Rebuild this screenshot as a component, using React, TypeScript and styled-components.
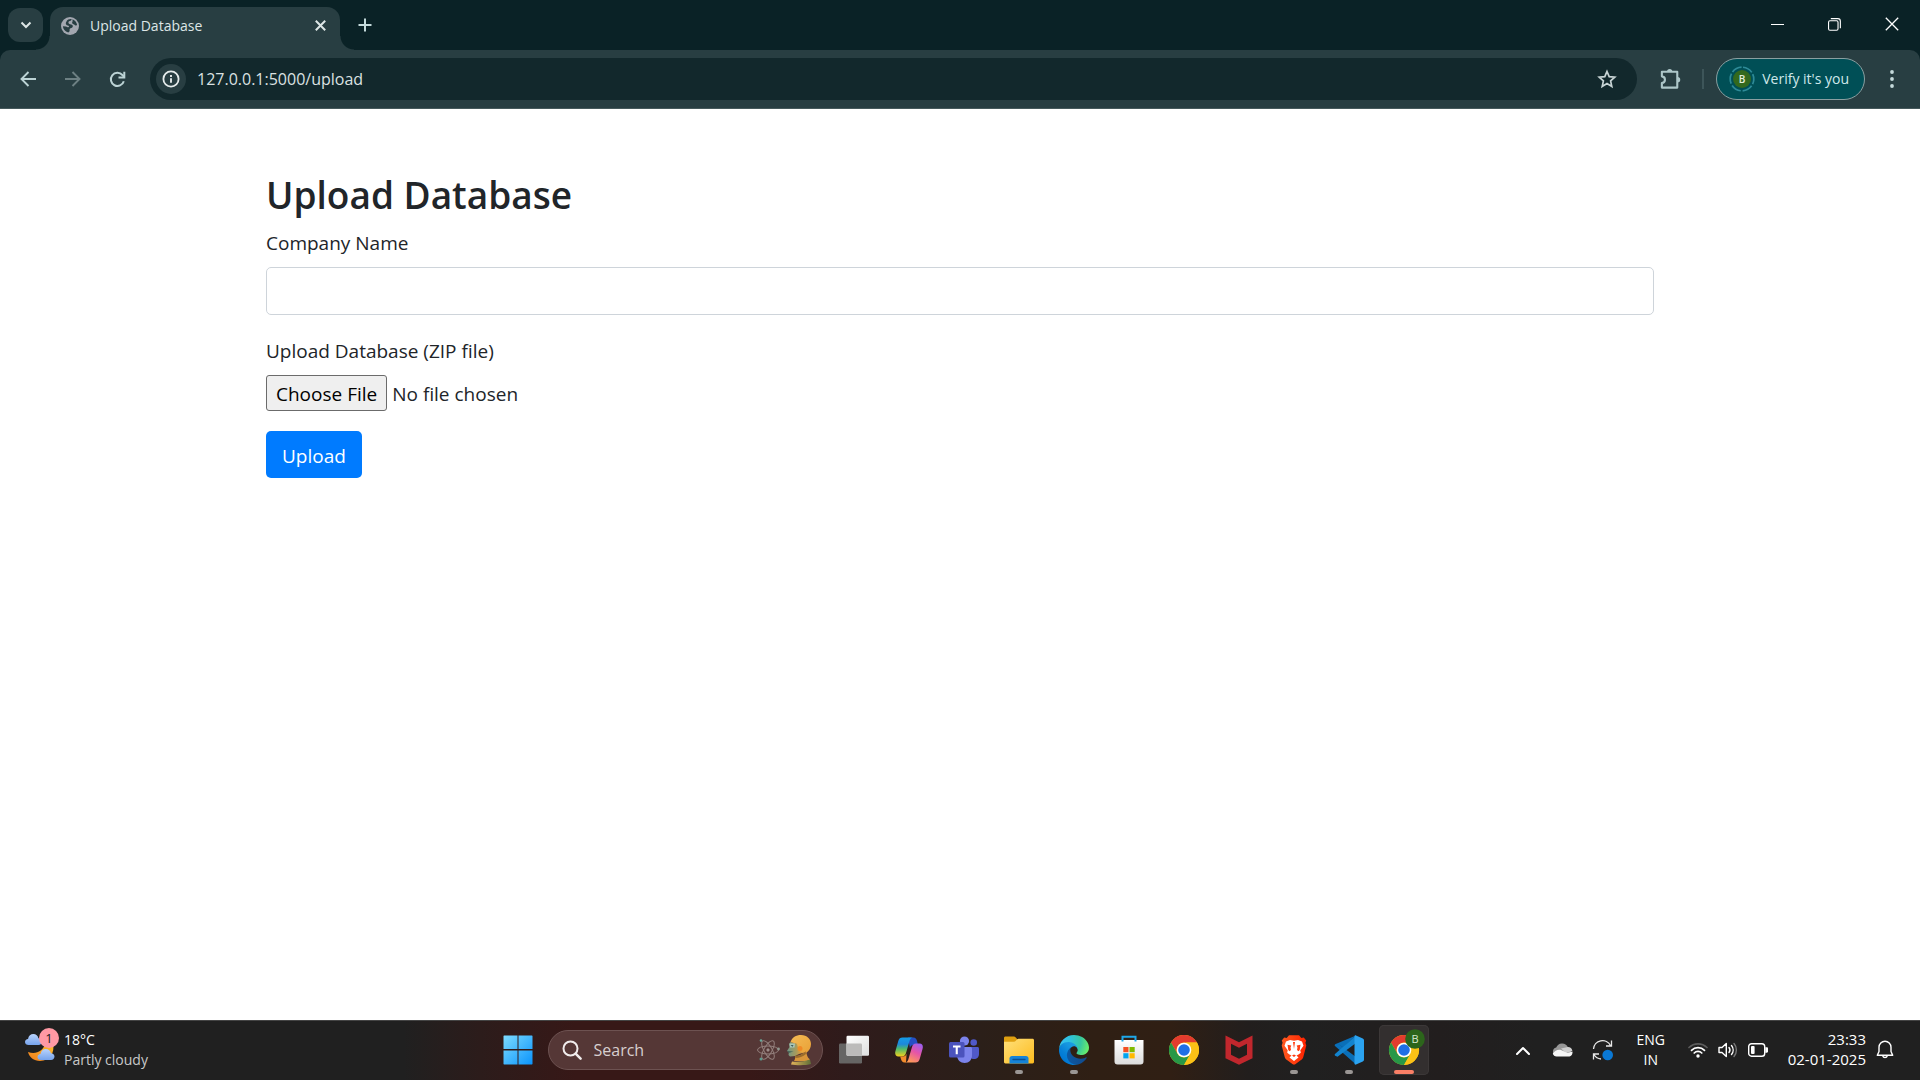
import React from "react";
import styled, { createGlobalStyle } from "styled-components";

const GlobalStyle = createGlobalStyle`
  *, *::before, *::after { box-sizing: border-box; }
  body {
    margin: 0;
    background: #fff;
    font-family: "Segoe UI", "Open Sans", "Noto Sans", sans-serif;
  }
  button, input { font-family: inherit; margin: 0; }
  svg { display: block; flex: none; }
`;

const Screen = styled.div`
  display: grid;
  grid-template-rows: auto 1fr auto;
  min-height: 100vh;
`;

const BareButton = styled.button`
  display: flex;
  align-items: center;
  justify-content: center;
  padding: 0;
  border: 0;
  background: transparent;
  color: inherit;
`;

/* ---------- browser frame ---------- */

const TabStrip = styled.div`
  display: flex;
  height: 50px;
  padding-left: 8px;
  background: #0a2226;
  color: #dde6e6;
`;

const TabSearch = styled(BareButton)`
  width: 35px;
  height: 34px;
  margin: 8px 7px 0 0;
  border-radius: 12px;
  background: #283e42;
`;

const Tab = styled.div`
  position: relative;
  display: flex;
  align-items: center;
  width: 290px;
  height: 43px;
  margin-top: 7px;
  padding: 0 12px 6px 11px;
  border-radius: 13px 13px 0 0;
  background: #283e42;

  &::before, &::after {
    content: "";
    position: absolute;
    bottom: 0;
    width: 14px;
    height: 14px;
  }
  &::before {
    left: -14px;
    background: radial-gradient(circle at 0 0, transparent 13px, #283e42 14px);
  }
  &::after {
    right: -14px;
    background: radial-gradient(circle at 100% 0, transparent 13px, #283e42 14px);
  }
`;

const TabTitle = styled.span`
  flex: 1;
  margin-left: 11px;
  font-size: 14px;
  line-height: 20px;
`;

const TabClose = styled(BareButton)`
  width: 16px;
  height: 20px;
`;

const NewTab = styled(BareButton)`
  width: 34px;
  height: 34px;
  margin: 8px 0 0 8px;
`;

const WindowControls = styled.div`
  display: flex;
  margin-left: auto;
  color: #fff;
`;

const WindowButton = styled(BareButton)`
  width: 57px;
  height: 48px;
`;

const ToolbarBack = styled.div`
  background: #0a2226;
`;

const Toolbar = styled.div`
  display: flex;
  align-items: center;
  height: 59px;
  padding: 0 13px 0 5px;
  border-radius: 10px 10px 0 0;
  border-bottom: 1px solid #46595c;
  background: #283e42;
  color: #bcd3d5;
`;

const NavButton = styled(BareButton)`
  width: 45px;
  height: 42px;
  color: ${(p) => (p.disabled ? "#6d8083" : "#bcd3d5")};
`;

const Omnibox = styled.div`
  display: flex;
  flex: 1;
  align-items: center;
  height: 42px;
  margin: 0 23px 0 10px;
  padding: 0 20px 0 6px;
  border-radius: 21px;
  background: #12282c;
`;

const SiteInfo = styled(BareButton)`
  width: 30px;
  height: 30px;
  border-radius: 15px;
  background: #283e42;
  color: #e6ecec;
`;

const UrlInput = styled.input`
  flex: 1;
  min-width: 0;
  height: 32px;
  margin-left: 11px;
  padding: 0;
  border: 0;
  outline: 0;
  background: transparent;
  color: #dbe1e2;
  font-size: 16px;
`;

const ToolbarDivider = styled.span`
  width: 2px;
  height: 20px;
  margin: 0 12px 0 20px;
  background: #3d5559;
`;

const VerifyButton = styled(BareButton)`
  gap: 7px;
  height: 42px;
  padding: 0 15px 1px 12px;
  border: 1px solid #8a9fa1;
  border-radius: 21px;
  background: #004f56;
  color: #cfe8ea;
  font-size: 14px;
  white-space: nowrap;
`;

const MenuButton = styled(BareButton)`
  width: 30px;
  height: 42px;
  margin-left: 12px;
  color: #c5dadb;
`;

/* ---------- page ---------- */

const Page = styled.main`
  width: 100%;
  max-width: 1426px;
  margin: 0 auto;
  padding: 60px 19px 40px;
  color: #212529;
  font-size: 19px;
  line-height: 32px;
`;

const Heading = styled.h2`
  margin: 0 0 6px;
  font-size: 37px;
  font-weight: 600;
  line-height: 52px;
`;

const Field = styled.div`
  display: flex;
  flex-direction: column;
  align-items: flex-start;
  margin-bottom: 20px;
`;

const Label = styled.label`
  margin-bottom: 8px;
`;

const TextInput = styled.input`
  width: 100%;
  height: 48px;
  padding: 8px 15px;
  border: 1px solid #ced4da;
  border-radius: 5px;
  background: #fff;
  color: #495057;
  font-size: 19px;
`;

const FileInput = styled.input`
  width: 100%;
  height: 36px;
  color: #212529;
  font-size: 19px;
  line-height: 30px;

  &::file-selector-button {
    height: 36px;
    margin: 0 5px 0 0;
    padding: 2px 9px 0;
    border: 1px solid #6b6b6b;
    border-radius: 3px;
    background: #efefef;
    color: #000;
    font-family: inherit;
    font-size: 19px;
    line-height: 30px;
  }
`;

const SubmitButton = styled.button`
  height: 47px;
  padding: 2px 16px 0;
  border: 0;
  border-radius: 5px;
  background: #007bff;
  color: #fff;
  font-size: 19px;
  line-height: 30px;
`;

/* ---------- taskbar ---------- */

const Taskbar = styled.footer`
  display: grid;
  grid-template-columns: 1fr auto 1fr;
  height: 60px;
  padding-bottom: 1px;
  border-top: 1px solid #444;
  background: linear-gradient(
    90deg,
    #202020 0%,
    #202020 21%,
    #2c1c1b 25%,
    #371817 30%,
    #371817 39%,
    #2f1b1b 44%,
    #2b1f19 51%,
    #2f1f14 57%,
    #301f14 61%,
    #221e1d 65%,
    #202020 68%,
    #221e1e 75%,
    #202020 80%
  );
  color: #fff;
`;

const Weather = styled(BareButton)`
  justify-content: flex-start;
  align-self: center;
  justify-self: start;
  gap: 4px;
  height: 50px;
  padding-left: 24px;
  font-size: 14px;
  line-height: 20px;
  text-align: left;
`;

const WeatherText = styled.span`
  display: flex;
  flex-direction: column;
  padding-bottom: 1px;
`;

const Dim = styled.span`
  color: #c8c8c8;
`;

const Apps = styled.nav`
  display: flex;
  align-items: center;
`;

const AppButton = styled(BareButton)<{ $active?: boolean }>`
  position: relative;
  width: 50px;
  height: 50px;
  margin: 0 2px 0 3px;
  border-radius: 5px;
  background: ${(p) => (p.$active ? "#332f2f" : "transparent")};
  box-shadow: ${(p) => (p.$active ? "inset 0 0 0 1px #3c3838" : "none")};
`;

const Indicator = styled.span<{ $active?: boolean }>`
  position: absolute;
  bottom: 1px;
  left: 50%;
  width: ${(p) => (p.$active ? "20px" : "8px")};
  height: 4px;
  border-radius: 2px;
  background: ${(p) => (p.$active ? "#f97f66" : "#9a9694")};
  transform: translateX(-50%);
`;

const SearchBox = styled.label`
  display: flex;
  align-items: center;
  gap: 6px;
  width: 275px;
  height: 40px;
  margin: 0 3px;
  padding: 0 10px 0 13px;
  border: 1px solid #6d5251;
  border-radius: 20px;
  background: #553736;
`;

const SearchInput = styled.input`
  flex: 1;
  min-width: 0;
  margin-left: 6px;
  padding: 0;
  border: 0;
  outline: 0;
  background: transparent;
  color: #fff;
  font-size: 16px;
  &::placeholder { color: #d8cfcf; opacity: 1; }
`;

const Tray = styled.div`
  display: flex;
  align-items: center;
  justify-content: flex-end;
  padding-right: 26px;
  font-size: 14px;
  line-height: 20px;
`;

const TrayButton = styled(BareButton)`
  width: 40px;
  height: 50px;
`;

const Language = styled(BareButton)`
  flex-direction: column;
  width: 56px;
  height: 50px;
  font-size: 14px;
  line-height: 20px;
`;

const Status = styled(BareButton)`
  gap: 10px;
  height: 50px;
  margin-left: 9px;
`;

const Clock = styled(BareButton)`
  flex-direction: column;
  align-items: flex-end;
  height: 50px;
  margin: 0 10px 0 20px;
  padding-bottom: 2px;
  font-size: 15px;
  line-height: 20px;
`;

/* ---------- drawings ---------- */

const GlobeIcon = () => (
  <svg width="18" height="18" viewBox="0 0 18 18">
    <circle cx="9" cy="9" r="9" fill="#a3a7b0" />
    <path d="M10.500 2c.3 1.200-.6 1.700-1.700 2-1.200.4-1.500 1-1.300 2 .2 1 1.300 1.200 2.500 1.400 1.400.3 2 1 1.800 2.100-.3 1.200-1.200 1.400-2.200 1.700-.9.300-1.100.9-1 1.900.2 1.300-.2 2-1.400 2.500C4 14.600 2 12 1.900 9.200l3 .3c1.200.1 1.500.9 2.400.8.700-.1 1-.9.300-1.500-1-.8-2.400-.6-2.700-1.900-.3-1.300.5-2 .8-2.900.2-.6.8-1 1.500-1.400 1-.5 2-.7 3.300-.6z" fill="#283e42" />
    <path d="M11.500 2.200c2.500 1 4.300 3.200 4.600 5.800-.7.700-1.600.5-2.300-.1-.8-.7-1.700-.6-2.400-1.400-.7-.9.100-1.500.2-2.400z" fill="#283e42" />
  </svg>
);

const ChevronDown = () => (
  <svg width="12" height="8" viewBox="0 0 12 8" fill="none" stroke="currentColor" strokeWidth="2">
    <path d="M1.500 1.500 6 6l4.500-4.500" />
  </svg>
);

const CloseIcon = ({ size, weight }: { size: number; weight: number }) => (
  <svg width={size} height={size} viewBox={`0 0 ${size} ${size}`} fill="none" stroke="currentColor" strokeWidth={weight}>
    <path d={`M.8.800 ${size - 0.8} ${size - 0.8}M${size - 0.8}.8.8 ${size - 0.8}`} />
  </svg>
);

const PlusIcon = () => (
  <svg width="14" height="14" viewBox="0 0 14 14" stroke="#c4dadb" strokeWidth="2">
    <path d="M7 .5v13M.5 7h13" />
  </svg>
);

const MinimizeIcon = () => (
  <svg width="13" height="13" viewBox="0 0 13 13" stroke="currentColor">
    <path d="M0 6.500h13" />
  </svg>
);

const RestoreIcon = () => (
  <svg width="13" height="13" viewBox="0 0 14 14" fill="none" stroke="currentColor" strokeWidth="1.200">
    <rect x=".6" y="3" width="10.200" height="10.200" rx="1.500" />
    <path d="M3 .7h7.600a2.700 2.700 0 0 1 2.700 2.700V11" />
  </svg>
);

const ArrowIcon = ({ flip }: { flip?: boolean }) => (
  <svg width="16" height="16" viewBox="0 0 16 16" fill="none" stroke="currentColor" strokeWidth="1.900">
    <path d={flip ? "M0 8h14M7.500 1l7 7-7 7" : "M16 8H2M8.500 1l-7 7 7 7"} />
  </svg>
);

const ReloadIcon = () => (
  <svg width="17" height="17" viewBox="0 0 17 17" fill="none" stroke="currentColor" strokeWidth="2">
    <path d="M14.800 10.200A6.600 6.600 0 1 1 13.400 4L15.300 6" />
    <path d="M15.300.800v5.800H9.500" />
  </svg>
);

const InfoIcon = () => (
  <svg width="18" height="18" viewBox="0 0 18 18" fill="none" stroke="currentColor">
    <circle cx="9" cy="9" r="7.600" strokeWidth="1.800" />
    <path d="M9 8.200v4.600M9 4.900v2" strokeWidth="1.900" />
  </svg>
);

const StarIcon = () => (
  <svg width="20" height="20" viewBox="0 0 20 20" fill="none" stroke="#c7d3d4" strokeWidth="1.700">
    <path d="m10 2.500 2.200 5.200 5.600.5-4.200 3.700 1.200 5.500L10 14.500l-4.800 2.900 1.200-5.500L2.200 8.200l5.600-.5z" />
  </svg>
);

const PuzzleIcon = () => (
  <svg width="22" height="22" viewBox="1 .5 20 20">
    <path d="M2.700 3.900h14v14.400h-14v-4.200c1.800-.2 2.800-1.400 2.800-3s-1-2.800-2.800-3z" fill="none" stroke="#adc7c9" strokeWidth="1.900" strokeLinejoin="round" />
    <path d="M7.400 3.800a2.400 2.400 0 0 1 4.800 0zM17 8.700a2.400 2.400 0 0 1 0 4.800z" fill="#adc7c9" />
  </svg>
);

const ProfileIcon = () => (
  <svg width="26" height="26" viewBox="0 0 26 26">
    <circle cx="13" cy="13" r="11.800" fill="none" stroke="#2e8b98" strokeWidth="1.700" strokeDasharray="10.400 1.950" transform="rotate(-85 13 13)" />
    <circle cx="13" cy="13" r="9" fill="#33691e" />
    <text x="13" y="17" fontSize="10" fontWeight="600" textAnchor="middle" fill="#e3eedd">B</text>
  </svg>
);

const DotsIcon = () => (
  <svg width="4" height="18" viewBox="0 0 4 18" fill="currentColor">
    <circle cx="2" cy="2" r="1.900" />
    <circle cx="2" cy="9" r="1.900" />
    <circle cx="2" cy="16" r="1.900" />
  </svg>
);

const CLOUD = "M3.500 12C1.500 12 0 10.700 0 8.900c0-1.700 1.300-2.900 3-3C3.600 2.600 5.700 1 8.300 1c2.700 0 4.700 1.800 5.100 4.300 2.100 0 3.600 1.400 3.600 3.300S15.600 12 13.500 12z";

const WeatherIcon = () => (
  <svg width="36" height="44" viewBox="0 0 36 44">
    <defs>
      <linearGradient id="cloud" x1="0" y1="0" x2="0" y2="1">
        <stop offset="0" stopColor="#b9d3fb" />
        <stop offset="1" stopColor="#76a3ec" />
      </linearGradient>
      <linearGradient id="moon" x1="0" y1="1" x2="1" y2="0">
        <stop offset="0" stopColor="#ef7d1c" />
        <stop offset="1" stopColor="#ffbe2e" />
      </linearGradient>
    </defs>
    <path d="M4 24c8 3 15-1 17-8l8 0c2 8-3 17-13 17C10 33 5 29 4 24z" fill="url(#moon)" />
    <path d={CLOUD} fill="url(#cloud)" transform="translate(1 5)" />
    <path d={CLOUD} fill="url(#cloud)" transform="translate(13.500 20)" />
    <circle cx="25" cy="10" r="10" fill="#ff99a4" />
    <text x="25" y="15" fontSize="13" textAnchor="middle" fill="#1c1c1c">1</text>
  </svg>
);

const WindowsIcon = () => (
  <svg width="30" height="30" viewBox="0 0 30 30">
    <linearGradient id="win" x1="0" y1="0" x2="1" y2="1" gradientUnits="objectBoundingBox">
      <stop offset="0" stopColor="#7ddcff" />
      <stop offset="1" stopColor="#0a93fb" />
    </linearGradient>
    <path d="M1 .5h13.500V14H.5V1zM15.500.5h13.500l.5.5v13h-14zM.5 15.500h14v14H1l-.5-.5zM15.500 15.500h14V29l-.5.5H15.500z" fill="url(#win)" />
  </svg>
);

const SearchIcon = () => (
  <svg width="20" height="20" viewBox="0 0 20 20" fill="none" stroke="#f1ecec" strokeWidth="2" strokeLinecap="round">
    <circle cx="8.500" cy="8.500" r="7" />
    <path d="m13.600 13.600 5 5" strokeWidth="2.500" />
  </svg>
);

const AtomIcon = () => (
  <svg width="24" height="24" viewBox="0 0 24 24" fill="none" stroke="#94807d" strokeWidth="1">
    <ellipse cx="12" cy="12" rx="10.500" ry="4" />
    <ellipse cx="12" cy="12" rx="10.500" ry="4" transform="rotate(60 12 12)" />
    <ellipse cx="12" cy="12" rx="10.500" ry="4" transform="rotate(120 12 12)" />
    <circle cx="12" cy="12" r="1.200" fill="#b5aaa5" />
    <circle cx="5" cy="2.500" r="1.300" fill="#69a79a" stroke="none" />
    <circle cx="22.500" cy="11" r="1.400" fill="#8f9790" stroke="none" />
    <circle cx="5" cy="21" r="1.500" fill="#5d9a8e" stroke="none" />
  </svg>
);

const BustIcon = () => (
  <svg width="26" height="32" viewBox="0 0 26 32">
    <defs>
      <linearGradient id="bust" x1="0" y1="0" x2="1" y2="0">
        <stop offset="0" stopColor="#6f9688" />
        <stop offset=".4" stopColor="#a79b5c" />
        <stop offset=".6" stopColor="#dc9c3c" />
        <stop offset="1" stopColor="#f5bd55" />
      </linearGradient>
      <linearGradient id="skull" x1="0" y1="0" x2="1" y2="1">
        <stop offset="0" stopColor="#f3ba55" />
        <stop offset="1" stopColor="#e9a136" />
      </linearGradient>
      <linearGradient id="base" x1="0" y1="0" x2="1" y2="0">
        <stop offset="0" stopColor="#e3b35a" />
        <stop offset="1" stopColor="#5f6f38" />
      </linearGradient>
    </defs>
    <path d="M4.500 8 3 10l.5 3L1 17l2 1-.5 3 1.500 1.500 5-.5 4-2 7-2 4-5z" fill="url(#bust)" />
    <path d="M4.500 8C6 3.500 10 1 15 1c6 0 10 4 10 9 0 4-2 7-5 9l-7-2-2-7z" fill="url(#skull)" />
    <path d="M9 22c4 0 8-2 11-5 1 4 1 6 4 8.500l-3 1.500H8c1-2 1.500-3 1-5z" fill="#d8953a" />
    <path d="M9 22c4 0 8-2 10.500-4.500l.5 2.500c-3 2.500-7 4-10.500 4z" fill="#9a6c2c" />
    <path d="M6 27.500c6 .5 12 0 18-2l1 4.500c-5 1.500-14 1.500-20 .5z" fill="url(#base)" />
    <path d="m3.500 9.500 5.500 0-.5 4-4.500 0z" fill="#a9c5b7" />
    <path d="m4.500 11 3 .3-1 1.500z" fill="#2f4b4b" />
    <path d="m1.500 17 6 .5-5 1.500z" fill="#47665a" />
    <circle cx="14" cy="14.500" r="2.500" fill="#f08a26" />
  </svg>
);

const TaskViewIcon = () => (
  <svg width="30" height="30" viewBox="0 0 30 30">
    <linearGradient id="tv" x1="0" y1="0" x2="1" y2="1">
      <stop offset="0" stopColor="#fff" />
      <stop offset="1" stopColor="#dedede" />
    </linearGradient>
    <rect x="0" y="8.500" width="23" height="20" rx="1.200" fill="#666564" />
    <rect x="7.500" y=".8" width="22.500" height="20" rx="1.200" fill="url(#tv)" />
    <path d="M7.500 8.500h14.300a1.200 1.200 0 0 1 1.200 1.200v11.100H8.700a1.200 1.200 0 0 1-1.200-1.200z" fill="#bcbbba" />
  </svg>
);

const CopilotIcon = () => (
  <svg width="28" height="26" viewBox="0 0 28 26">
    <defs>
      <linearGradient id="cpa" x1=".3" y1="0" x2=".3" y2="1">
        <stop offset="0" stopColor="#149de8" />
        <stop offset=".35" stopColor="#1d88dc" />
        <stop offset=".6" stopColor="#4fba6a" />
        <stop offset="1" stopColor="#f6d01c" />
      </linearGradient>
      <linearGradient id="cpb" x1=".8" y1="0" x2=".3" y2="1">
        <stop offset="0" stopColor="#9c5ff0" />
        <stop offset=".45" stopColor="#e554a8" />
        <stop offset="1" stopColor="#ff9c55" />
      </linearGradient>
    </defs>
    <path d="M17 .5h1.500c2 0 2.900 1.300 3.500 3.200L23 8h-4.500c-2 0-3 1-3.600 3L13 .5z" fill="#244fc5" />
    <path d="M7.500.5H18c-2 0-2.800 1.400-3.400 3.300L11 16c-.7 2.300-1.700 3.500-4 3.500H3.500C.5 19.500-.3 17 .4 14.300L3.300 4C4 1.600 5.300.5 7.500.5z" fill="url(#cpa)" />
    <path d="M11 25.500H9.500c-2 0-2.900-1.300-3.500-3.200l-.8-2.800H8c2 0 3-1 3.600-3z" fill="#f28c2c" />
    <path d="M20.500 25.500H10c2 0 2.800-1.400 3.400-3.300L17 10c.7-2.300 1.700-3.500 4-3.500h3.500c3 0 3.800 2.500 3.100 5.200L24.700 22c-.7 2.400-2 3.500-4.200 3.500z" fill="url(#cpb)" />
  </svg>
);

const TeamsIcon = () => (
  <svg width="30" height="28" viewBox="0 0 30 28">
    <circle cx="24.700" cy="6.500" r="3.300" fill="#5059c9" />
    <path d="M20 11h8.500c.8 0 1.500.7 1.500 1.500V18c0 3-2 5-5 5s-5-2-5-5z" fill="#5059c9" />
    <circle cx="15.500" cy="5" r="4.600" fill="#7b83eb" />
    <path d="M9 11h12.500c.8 0 1.500.7 1.500 1.500V19c0 5-3 8-7.300 8S8 24 8 19v-7c0-.6.400-1 1-1z" fill="#7b83eb" />
    <rect x="0" y="6" width="15.500" height="15.500" rx="1.500" fill="#4b53bc" />
    <path d="M4 9.500h7.500v2H8.800v6.700H6.700v-6.700H4z" fill="#fff" />
  </svg>
);

const ExplorerIcon = () => (
  <svg width="30" height="28" viewBox="0 0 30 28">
    <linearGradient id="fold" x1="0" y1="0" x2="1" y2="1">
      <stop offset="0" stopColor="#ffe07a" />
      <stop offset="1" stopColor="#fdbb1e" />
    </linearGradient>
    <path d="M0 2C0 1 .7.500 1.500.500h8c1 0 1.500.3 2.200 1L14 4H30v6H0z" fill="#e0a010" />
    <path d="M0 5.800h9.500c1 0 1.600-.3 2.300-1l1.200-1.200c.6-.6 1-.8 2-.8h13.500c.8 0 1.500.6 1.500 1.400V26c0 .8-.6 1.400-1.400 1.400H1.400C.6 27.400 0 26.800 0 26z" fill="url(#fold)" />
    <path d="M5.500 27.500V22.500c0-1.500 1-2.500 2.500-2.500h14c1.500 0 2.500 1 2.500 2.500v5z" fill="#1583d8" />
    <path d="M9 23.500h12" stroke="#0a4f93" strokeWidth="1.300" strokeLinecap="round" />
  </svg>
);

const EdgeIcon = () => (
  <svg width="30" height="30" viewBox="0 0 256 256">
    <defs>
      <linearGradient id="e1" x1="63" y1="177" x2="241" y2="177" gradientUnits="userSpaceOnUse">
        <stop offset="0" stopColor="#0c59a4" />
        <stop offset="1" stopColor="#114a8b" />
      </linearGradient>
      <linearGradient id="e2" x1="157" y1="99" x2="46" y2="221" gradientUnits="userSpaceOnUse">
        <stop offset="0" stopColor="#1b9de2" />
        <stop offset=".3" stopColor="#1595df" />
        <stop offset=".7" stopColor="#0680d7" />
        <stop offset="1" stopColor="#0078d4" />
      </linearGradient>
      <radialGradient id="e3" cx="26" cy="45" r="230" gradientUnits="userSpaceOnUse">
        <stop offset="0" stopColor="#35c1f1" />
        <stop offset=".3" stopColor="#2fc2df" />
        <stop offset=".7" stopColor="#36c7a0" />
        <stop offset="1" stopColor="#66eb6e" />
      </radialGradient>
    </defs>
    <path d="M231 190.500c-3.400 1.800-6.900 3.400-10.500 4.700a101.700 101.700 0 0 1-35.900 6.500c-47.300 0-88.500-32.500-88.500-74.300.1-11.400 6.400-21.900 16.400-27.300-42.800 1.800-53.800 46.400-53.800 72.500 0 74 68.100 81.400 82.800 81.400 7.900 0 19.800-2.300 27-4.600l1.300-.4a128.300 128.300 0 0 0 66.600-52.800 4 4 0 0 0-5.400-5.700z" fill="url(#e1)" />
    <path d="M105.700 241.400a79.200 79.200 0 0 1-22.700-21.300 80.700 80.700 0 0 1 29.500-120c3.200-1.500 8.500-4.200 15.600-4.100 10.200.1 19.700 5 25.700 13.200 4 5.400 6.300 11.900 6.300 18.700 0-.2 24.500-79.600-80-79.600-43.900 0-80 41.700-80 78.200-.2 19.300 4 38.500 12.100 56a128 128 0 0 0 156.400 67.100 75.500 75.500 0 0 1-62.900-8.200z" fill="url(#e2)" />
    <path d="M152.300 148.900c-.9 1-3.400 2.500-3.400 5.600 0 2.600 1.700 5.200 4.800 7.300 14.300 10 41.400 8.600 41.500 8.600 10.700 0 21.100-2.900 30.300-8.300A61.400 61.400 0 0 0 256 109.100c.3-22.400-8-37.300-11.300-43.900C223.500 23.900 177.700 0 128 0A128 128 0 0 0 0 126.200c.5-36.500 36.800-66 80-66 3.500 0 23.500.3 42 10.100 16.300 8.600 24.900 18.900 30.800 29.200 6.200 10.700 7.300 24.100 7.300 29.500 0 5.300-2.700 13.300-7.800 19.900z" fill="url(#e3)" />
  </svg>
);

const StoreIcon = () => (
  <svg width="30" height="30" viewBox="0 0 30 30">
    <linearGradient id="bag" x1="0" y1="0" x2="0" y2="1">
      <stop offset="0" stopColor="#fff" />
      <stop offset="1" stopColor="#dcdcdc" />
    </linearGradient>
    <path d="M.5 5h29v21.500a3 3 0 0 1-3 3h-23a3 3 0 0 1-3-3z" fill="url(#bag)" />
    <path d="M8.500 6.500V1.700h13v4.800" fill="none" stroke="#1ea7e8" strokeWidth="2" />
    <path d="M9.300 12h5.200v5.200H9.300z" fill="#f25022" />
    <path d="M15.500 12h5.200v5.200h-5.200z" fill="#7fba00" />
    <path d="M9.300 18.200h5.200v5.200H9.300z" fill="#00a4ef" />
    <path d="M15.500 18.200h5.200v5.200h-5.200z" fill="#ffb900" />
  </svg>
);

const ChromeIcon = ({ badge }: { badge?: boolean }) => (
  <svg width={badge ? 42 : 30} height={badge ? 42 : 30} viewBox={badge ? "-6 -6 42 42" : "0 0 30 30"}>
    <circle cx="15" cy="15" r="15" fill="#fbc116" />
    <path d="M2 7.500A15 15 0 0 1 28 7.500H15a7.500 7.500 0 0 0-6.500 11.200z" fill="#e33b2e" />
    <path d="M2 7.500 8.500 18.750A7.500 7.500 0 0 0 21.500 18.750L15 30A15 15 0 0 1 2 7.500z" fill="#279847" />
    <path d="M15 7.500h13A15 15 0 0 1 15 30l6.500-11.250A7.500 7.500 0 0 0 15 7.500z" fill="#fbc116" />
    <circle cx="15" cy="15" r="7.300" fill="#fff" />
    <circle cx="15" cy="15" r="5.800" fill="#1f6fe5" />
    {badge && (
      <>
        <circle cx="26" cy="4" r="9.800" fill="#2c651b" />
        <text x="26" y="8" fontSize="11" textAnchor="middle" fill="#d7e8cf">B</text>
      </>
    )}
  </svg>
);

const McAfeeIcon = () => (
  <svg width="28" height="30" viewBox="0 0 28 30">
    <path d="M.5.5 14 7.300 27.500.5v22.700L14 29.800.5 23.200zM6 8.800v11l8 4 8-4v-11l-8 4z" fill="#c1272d" fillRule="evenodd" />
  </svg>
);

const BraveIcon = () => (
  <svg width="26" height="30" viewBox="0 0 26 30">
    <linearGradient id="brave" x1="0" y1="0" x2="1" y2="0">
      <stop offset="0" stopColor="#ff5a1f" />
      <stop offset="1" stopColor="#ff2200" />
    </linearGradient>
    <path d="M8 .3h10l2.300 2.600 2.500-.5 2.400 3-.8 2.400.9 2.600-3 11.500c-.4 1.500-1.200 2.300-2.300 3.100L14.600 29c-1 .7-2.200.7-3.200 0L6 25c-1.100-.8-1.900-1.600-2.300-3.100L.7 10.400l.9-2.600L.8 5.400l2.400-3 2.500.5z" fill="url(#brave)" />
    <path d="M5 6.500 9 5l4 .7L17 5l4 1.500 1.500 4.200-3.200 4.600.5 2.500-2.300 1.600-2 1.200 2 1.800-4.500 3.600-4.500-3.600 2-1.800-2-1.200-2.300-1.600.5-2.500-3.200-4.600z" fill="#fff" />
    <path d="m6.500 9.700 3.800.8-.8 2 .5 2.500-1.500 1.300-1.200-1.300zM19.500 9.700l-3.800.8.8 2-.5 2.500 1.500 1.300 1.200-1.300zM11 20.500l2-1 2 1-2 1.500zM12 7h2l-1 7z" fill="#ff3c10" />
  </svg>
);

const VSCodeIcon = () => (
  <svg width="30" height="30" viewBox="0 0 30 30">
    <path d="M22 .6 9 12.500l-5.500-4.200-2.300.9c-.7.600-.7 1.200-.2 1.700L22 29.500V22L3.500 8.300z" fill="#0a6fb8" />
    <path d="M22 8 3.500 21.700l-2.300-.9c-.7-.6-.7-1.200-.2-1.700L22 .5z" fill="#1384cf" />
    <path d="M22 .4l6.800 3c.8.400 1.200 1 1.200 1.800v19.600c0 .8-.4 1.400-1.200 1.800L22 29.600c-1 .2-1.500-.2-1.500-.8V1.200c0-.6.500-1 1.500-.8z" fill="#2ba3f0" />
  </svg>
);

const ChevronUp = () => (
  <svg width="14" height="9" viewBox="0 0 14 9" fill="none" stroke="#fff" strokeWidth="2" strokeLinecap="round" strokeLinejoin="round">
    <path d="m1 8 6-6 6 6" />
  </svg>
);

const OneDriveIcon = () => (
  <svg width="21" height="14" viewBox="0 0 21 14">
    <path d="M4.500 13a4.300 4.300 0 0 1-.3-8.400A6.300 6.300 0 0 1 15.800 4a5 5 0 0 1 .7 9z" fill="#979797" />
    <path d="M9 5.500 15.800 4a4.800 4.800 0 0 1 4.600 4L14 10z" fill="#cfcfcf" />
    <path d="M.8 10.500C3 7.500 6.500 6 9.500 7.300l6 2.700 5-1.500c.3 3-1.500 5-4 5h-12c-1.700 0-3.200-1-3.700-3z" fill="#f5f5f5" />
  </svg>
);

const SyncIcon = () => (
  <svg width="22" height="22" viewBox="0 0 22 22" fill="none" stroke="#e8e8e8" strokeWidth="1.300">
    <path d="M1.500 10a9 9 0 0 1 17-3.500M19.500 1.500v5.500H14M1.500 20.500V15H7M2 15.500A9 9 0 0 0 9 20" />
    <circle cx="15.700" cy="16" r="5.300" fill="#0a78d4" stroke="none" />
  </svg>
);

const WifiIcon = () => (
  <svg width="20" height="16" viewBox="0 0 20 16" fill="none" strokeWidth="1.700" strokeLinecap="round">
    <path d="M1 5.500a12.800 12.800 0 0 1 18 0" stroke="#5c5c5c" />
    <path d="M3.500 8.300a9.200 9.200 0 0 1 13 0M6.200 11a5.400 5.400 0 0 1 7.600 0" stroke="#fff" />
    <circle cx="10" cy="14" r="1.700" fill="#fff" />
  </svg>
);

const VolumeIcon = () => (
  <svg width="20" height="16" viewBox="0 0 20 16" fill="none" stroke="#fff" strokeWidth="1.400" strokeLinecap="round" strokeLinejoin="round">
    <path d="M1 5.500h3L8.300 1.500v13L4 10.500H1z" />
    <path d="M11 5.500a4 4 0 0 1 0 5M13.500 3.500a7 7 0 0 1 0 9" />
    <path d="M16 1.500a10 10 0 0 1 0 13" stroke="#777" />
  </svg>
);

const BatteryIcon = () => (
  <svg width="20" height="14" viewBox="0 0 20 14">
    <rect x=".7" y=".7" width="16" height="12.500" rx="2.800" fill="none" stroke="#fff" strokeWidth="1.400" />
    <rect x="3" y="3" width="3.600" height="8" rx="1" fill="#fff" />
    <path d="M17.300 4.300h1.500c.7 0 1.200.5 1.200 1.200v3c0 .7-.5 1.200-1.200 1.200h-1.500z" fill="#fff" />
  </svg>
);

const BellIcon = () => (
  <svg width="18" height="20" viewBox="0 0 18 20" fill="none" stroke="#fff" strokeWidth="1.400" strokeLinejoin="round">
    <path d="M9 1.200a6 6 0 0 0-6 6v4.300L1.300 15.300h15.400L15 11.500V7.200a6 6 0 0 0-6-6zM6.700 15.800a2.400 2.400 0 0 0 4.600 0" />
  </svg>
);

/* ---------- composition ---------- */

type PinnedApp = { name: string; icon: React.ReactNode; running?: boolean; active?: boolean };

const pinnedApps: PinnedApp[] = [
  { name: "Task View", icon: <TaskViewIcon /> },
  { name: "Copilot", icon: <CopilotIcon /> },
  { name: "Microsoft Teams", icon: <TeamsIcon /> },
  { name: "File Explorer", icon: <ExplorerIcon />, running: true },
  { name: "Microsoft Edge", icon: <EdgeIcon />, running: true },
  { name: "Microsoft Store", icon: <StoreIcon /> },
  { name: "Google Chrome", icon: <ChromeIcon /> },
  { name: "McAfee", icon: <McAfeeIcon /> },
  { name: "Brave", icon: <BraveIcon />, running: true },
  { name: "Visual Studio Code", icon: <VSCodeIcon />, running: true },
  { name: "Google Chrome profile B", icon: <ChromeIcon badge />, running: true, active: true },
];

const BrowserFrame = () => (
  <header>
    <TabStrip>
      <TabSearch aria-label="Search tabs"><ChevronDown /></TabSearch>
      <Tab>
        <GlobeIcon />
        <TabTitle>Upload Database</TabTitle>
        <TabClose aria-label="Close tab"><CloseIcon size={11} weight={2} /></TabClose>
      </Tab>
      <NewTab aria-label="New tab"><PlusIcon /></NewTab>
      <WindowControls>
        <WindowButton aria-label="Minimize"><MinimizeIcon /></WindowButton>
        <WindowButton aria-label="Restore"><RestoreIcon /></WindowButton>
        <WindowButton aria-label="Close"><CloseIcon size={14} weight={1.3} /></WindowButton>
      </WindowControls>
    </TabStrip>
    <ToolbarBack>
      <Toolbar>
        <NavButton aria-label="Back"><ArrowIcon /></NavButton>
        <NavButton aria-label="Forward" disabled><ArrowIcon flip /></NavButton>
        <NavButton aria-label="Reload"><ReloadIcon /></NavButton>
        <Omnibox>
          <SiteInfo aria-label="Site information"><InfoIcon /></SiteInfo>
          <UrlInput aria-label="Address" defaultValue="127.0.0.1:5000/upload" />
          <BareButton aria-label="Bookmark"><StarIcon /></BareButton>
        </Omnibox>
        <BareButton aria-label="Extensions"><PuzzleIcon /></BareButton>
        <ToolbarDivider />
        <VerifyButton><ProfileIcon />Verify it's you</VerifyButton>
        <MenuButton aria-label="Menu"><DotsIcon /></MenuButton>
      </Toolbar>
    </ToolbarBack>
  </header>
);

const UploadPage = () => (
  <Page>
    <Heading>Upload Database</Heading>
    <form onSubmit={(e) => e.preventDefault()}>
      <Field>
        <Label htmlFor="company">Company Name</Label>
        <TextInput id="company" type="text" />
      </Field>
      <Field>
        <Label htmlFor="database">Upload Database (ZIP file)</Label>
        <FileInput id="database" type="file" accept=".zip" />
      </Field>
      <SubmitButton type="submit">Upload</SubmitButton>
    </form>
  </Page>
);

const SystemTaskbar = () => (
  <Taskbar>
    <Weather>
      <WeatherIcon />
      <WeatherText>
        <span>18°C</span>
        <Dim>Partly cloudy</Dim>
      </WeatherText>
    </Weather>
    <Apps>
      <AppButton aria-label="Start"><WindowsIcon /></AppButton>
      <SearchBox>
        <SearchIcon />
        <SearchInput type="text" aria-label="Search" placeholder="Search" />
        <AtomIcon />
        <BustIcon />
      </SearchBox>
      {pinnedApps.map((app) => (
        <AppButton key={app.name} aria-label={app.name} $active={app.active}>
          {app.icon}
          {app.running && <Indicator $active={app.active} />}
        </AppButton>
      ))}
    </Apps>
    <Tray>
      <TrayButton aria-label="Show hidden icons"><ChevronUp /></TrayButton>
      <TrayButton aria-label="OneDrive"><OneDriveIcon /></TrayButton>
      <TrayButton aria-label="Sync"><SyncIcon /></TrayButton>
      <Language><span>ENG</span><span>IN</span></Language>
      <Status aria-label="Network, volume and battery">
        <WifiIcon />
        <VolumeIcon />
        <BatteryIcon />
      </Status>
      <Clock><span>23:33</span><span>02-01-2025</span></Clock>
      <BareButton aria-label="Notifications"><BellIcon /></BareButton>
    </Tray>
  </Taskbar>
);

export default function App() {
  return (
    <Screen>
      <GlobalStyle />
      <BrowserFrame />
      <UploadPage />
      <SystemTaskbar />
    </Screen>
  );
}
